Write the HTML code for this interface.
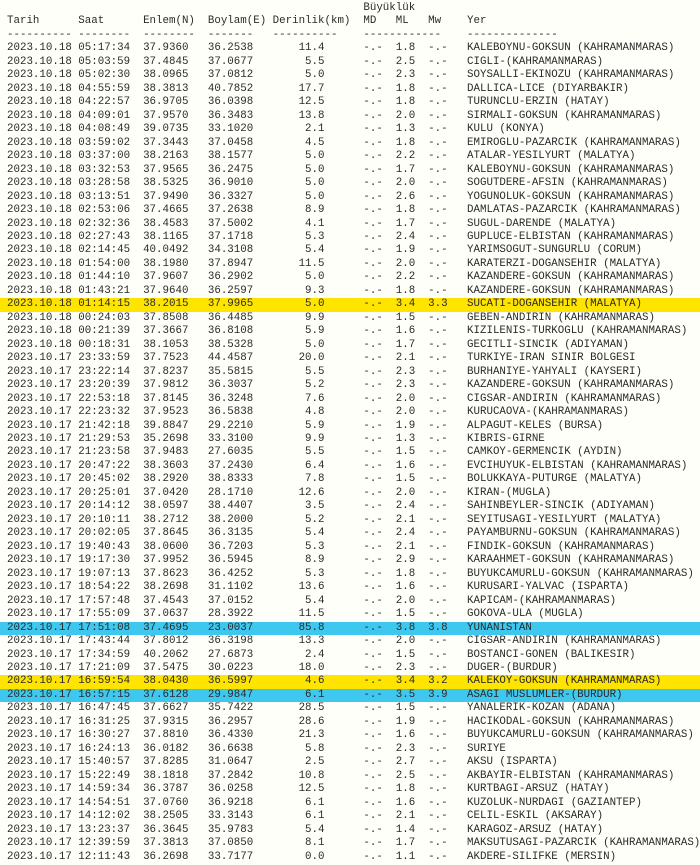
<!DOCTYPE html>
<html><head><meta charset="utf-8"><style>
html,body{margin:0;padding:0;background:#fffffa;width:700px;height:865px;overflow:hidden}
.w{padding-top:2px;font-family:"Liberation Mono","DejaVu Sans Mono",monospace;font-size:10.8px;line-height:13.48px;color:#2a2a2a}
.w div{padding-left:7px;height:13.48px;white-space:pre}
.y{background:#ffe400}
.b{background:#3ec8f0}
</style></head><body><div class="w"><div>                                                       Büyüklük</div><div>Tarih      Saat      Enlem(N)  Boylam(E) Derinlik(km)  MD   ML   Mw    Yer</div><div>---------- --------  --------  -------   ----------    ------------    --------------</div><div>2023.10.18 05:17:34  37.9360   36.2538       11.4      -.-  1.8  -.-   KALEBOYNU-GOKSUN (KAHRAMANMARAS)</div><div>2023.10.18 05:03:59  37.4845   37.0677        5.5      -.-  2.5  -.-   CIGLI-(KAHRAMANMARAS)</div><div>2023.10.18 05:02:30  38.0965   37.0812        5.0      -.-  2.3  -.-   SOYSALLI-EKINOZU (KAHRAMANMARAS)</div><div>2023.10.18 04:55:59  38.3813   40.7852       17.7      -.-  1.8  -.-   DALLICA-LICE (DIYARBAKIR)</div><div>2023.10.18 04:22:57  36.9705   36.0398       12.5      -.-  1.8  -.-   TURUNCLU-ERZIN (HATAY)</div><div>2023.10.18 04:09:01  37.9570   36.3483       13.8      -.-  2.0  -.-   SIRMALI-GOKSUN (KAHRAMANMARAS)</div><div>2023.10.18 04:08:49  39.0735   33.1020        2.1      -.-  1.3  -.-   KULU (KONYA)</div><div>2023.10.18 03:59:02  37.3443   37.0458        4.5      -.-  1.8  -.-   EMIROGLU-PAZARCIK (KAHRAMANMARAS)</div><div>2023.10.18 03:37:00  38.2163   38.1577        5.0      -.-  2.2  -.-   ATALAR-YESILYURT (MALATYA)</div><div>2023.10.18 03:32:53  37.9565   36.2475        5.0      -.-  1.7  -.-   KALEBOYNU-GOKSUN (KAHRAMANMARAS)</div><div>2023.10.18 03:28:58  38.5325   36.9010        5.0      -.-  2.0  -.-   SOGUTDERE-AFSIN (KAHRAMANMARAS)</div><div>2023.10.18 03:13:51  37.9490   36.3327        5.0      -.-  2.6  -.-   YOGUNOLUK-GOKSUN (KAHRAMANMARAS)</div><div>2023.10.18 02:53:06  37.4665   37.2638        8.9      -.-  1.8  -.-   DAMLATAS-PAZARCIK (KAHRAMANMARAS)</div><div>2023.10.18 02:32:36  38.4583   37.5002        4.1      -.-  1.7  -.-   SUGUL-DARENDE (MALATYA)</div><div>2023.10.18 02:27:43  38.1165   37.1718        5.3      -.-  2.4  -.-   GUPLUCE-ELBISTAN (KAHRAMANMARAS)</div><div>2023.10.18 02:14:45  40.0492   34.3108        5.4      -.-  1.9  -.-   YARIMSOGUT-SUNGURLU (CORUM)</div><div>2023.10.18 01:54:00  38.1980   37.8947       11.5      -.-  2.0  -.-   KARATERZI-DOGANSEHIR (MALATYA)</div><div>2023.10.18 01:44:10  37.9607   36.2902        5.0      -.-  2.2  -.-   KAZANDERE-GOKSUN (KAHRAMANMARAS)</div><div>2023.10.18 01:43:21  37.9640   36.2597        9.3      -.-  1.8  -.-   KAZANDERE-GOKSUN (KAHRAMANMARAS)</div><div class="y">2023.10.18 01:14:15  38.2015   37.9965        5.0      -.-  3.4  3.3   SUCATI-DOGANSEHIR (MALATYA)</div><div>2023.10.18 00:24:03  37.8508   36.4485        9.9      -.-  1.5  -.-   GEBEN-ANDIRIN (KAHRAMANMARAS)</div><div>2023.10.18 00:21:39  37.3667   36.8108        5.9      -.-  1.6  -.-   KIZILENIS-TURKOGLU (KAHRAMANMARAS)</div><div>2023.10.18 00:18:31  38.1053   38.5328        5.0      -.-  1.7  -.-   GECITLI-SINCIK (ADIYAMAN)</div><div>2023.10.17 23:33:59  37.7523   44.4587       20.0      -.-  2.1  -.-   TURKIYE-IRAN SINIR BOLGESI</div><div>2023.10.17 23:22:14  37.8237   35.5815        5.5      -.-  2.3  -.-   BURHANIYE-YAHYALI (KAYSERI)</div><div>2023.10.17 23:20:39  37.9812   36.3037        5.2      -.-  2.3  -.-   KAZANDERE-GOKSUN (KAHRAMANMARAS)</div><div>2023.10.17 22:53:18  37.8145   36.3248        7.6      -.-  2.0  -.-   CIGSAR-ANDIRIN (KAHRAMANMARAS)</div><div>2023.10.17 22:23:32  37.9523   36.5838        4.8      -.-  2.0  -.-   KURUCAOVA-(KAHRAMANMARAS)</div><div>2023.10.17 21:42:18  39.8847   29.2210        5.9      -.-  1.9  -.-   ALPAGUT-KELES (BURSA)</div><div>2023.10.17 21:29:53  35.2698   33.3100        9.9      -.-  1.3  -.-   KIBRIS-GIRNE</div><div>2023.10.17 21:23:58  37.9483   27.6035        5.5      -.-  1.5  -.-   CAMKOY-GERMENCIK (AYDIN)</div><div>2023.10.17 20:47:22  38.3603   37.2430        6.4      -.-  1.6  -.-   EVCIHUYUK-ELBISTAN (KAHRAMANMARAS)</div><div>2023.10.17 20:45:02  38.2920   38.8333        7.8      -.-  1.5  -.-   BOLUKKAYA-PUTURGE (MALATYA)</div><div>2023.10.17 20:25:01  37.0420   28.1710       12.6      -.-  2.0  -.-   KIRAN-(MUGLA)</div><div>2023.10.17 20:14:12  38.0597   38.4407        3.5      -.-  2.4  -.-   SAHINBEYLER-SINCIK (ADIYAMAN)</div><div>2023.10.17 20:10:11  38.2712   38.2000        5.2      -.-  2.1  -.-   SEYITUSAGI-YESILYURT (MALATYA)</div><div>2023.10.17 20:02:05  37.8645   36.3135        5.4      -.-  2.4  -.-   PAYAMBURNU-GOKSUN (KAHRAMANMARAS)</div><div>2023.10.17 19:40:43  38.0600   36.7203        5.3      -.-  2.1  -.-   FINDIK-GOKSUN (KAHRAMANMARAS)</div><div>2023.10.17 19:17:30  37.9952   36.5945        8.9      -.-  2.9  -.-   KARAAHMET-GOKSUN (KAHRAMANMARAS)</div><div>2023.10.17 19:07:13  37.8623   36.4252        5.3      -.-  1.8  -.-   BUYUKCAMURLU-GOKSUN (KAHRAMANMARAS)</div><div>2023.10.17 18:54:22  38.2698   31.1102       13.6      -.-  1.6  -.-   KURUSARI-YALVAC (ISPARTA)</div><div>2023.10.17 17:57:48  37.4543   37.0152        5.4      -.-  2.0  -.-   KAPICAM-(KAHRAMANMARAS)</div><div>2023.10.17 17:55:09  37.0637   28.3922       11.5      -.-  1.5  -.-   GOKOVA-ULA (MUGLA)</div><div class="b">2023.10.17 17:51:08  37.4695   23.0037       85.8      -.-  3.8  3.8   YUNANISTAN</div><div>2023.10.17 17:43:44  37.8012   36.3198       13.3      -.-  2.0  -.-   CIGSAR-ANDIRIN (KAHRAMANMARAS)</div><div>2023.10.17 17:34:59  40.2062   27.6873        2.4      -.-  1.5  -.-   BOSTANCI-GONEN (BALIKESIR)</div><div>2023.10.17 17:21:09  37.5475   30.0223       18.0      -.-  2.3  -.-   DUGER-(BURDUR)</div><div class="y">2023.10.17 16:59:54  38.0430   36.5997        4.6      -.-  3.4  3.2   KALEKOY-GOKSUN (KAHRAMANMARAS)</div><div class="b">2023.10.17 16:57:15  37.6128   29.9847        6.1      -.-  3.5  3.9   ASAGI MUSLUMLER-(BURDUR)</div><div>2023.10.17 16:47:45  37.6627   35.7422       28.5      -.-  1.5  -.-   YANALERIK-KOZAN (ADANA)</div><div>2023.10.17 16:31:25  37.9315   36.2957       28.6      -.-  1.9  -.-   HACIKODAL-GOKSUN (KAHRAMANMARAS)</div><div>2023.10.17 16:30:27  37.8810   36.4330       21.3      -.-  1.6  -.-   BUYUKCAMURLU-GOKSUN (KAHRAMANMARAS)</div><div>2023.10.17 16:24:13  36.0182   36.6638        5.8      -.-  2.3  -.-   SURIYE</div><div>2023.10.17 15:40:57  37.8285   31.0647        2.5      -.-  2.7  -.-   AKSU (ISPARTA)</div><div>2023.10.17 15:22:49  38.1818   37.2842       10.8      -.-  2.5  -.-   AKBAYIR-ELBISTAN (KAHRAMANMARAS)</div><div>2023.10.17 14:59:34  36.3787   36.0258       12.5      -.-  1.8  -.-   KURTBAGI-ARSUZ (HATAY)</div><div>2023.10.17 14:54:51  37.0760   36.9218        6.1      -.-  1.6  -.-   KUZOLUK-NURDAGI (GAZIANTEP)</div><div>2023.10.17 14:12:02  38.2505   33.3143        6.1      -.-  2.1  -.-   CELIL-ESKIL (AKSARAY)</div><div>2023.10.17 13:23:37  36.3645   35.9783        5.4      -.-  1.4  -.-   KARAGOZ-ARSUZ (HATAY)</div><div>2023.10.17 12:39:59  37.3813   37.0850        8.1      -.-  1.7  -.-   MAKSUTUSAGI-PAZARCIK (KAHRAMANMARAS)</div><div>2023.10.17 12:11:43  36.2698   33.7177        0.0      -.-  1.1  -.-   AKDERE-SILIFKE (MERSIN)</div></div></body></html>
